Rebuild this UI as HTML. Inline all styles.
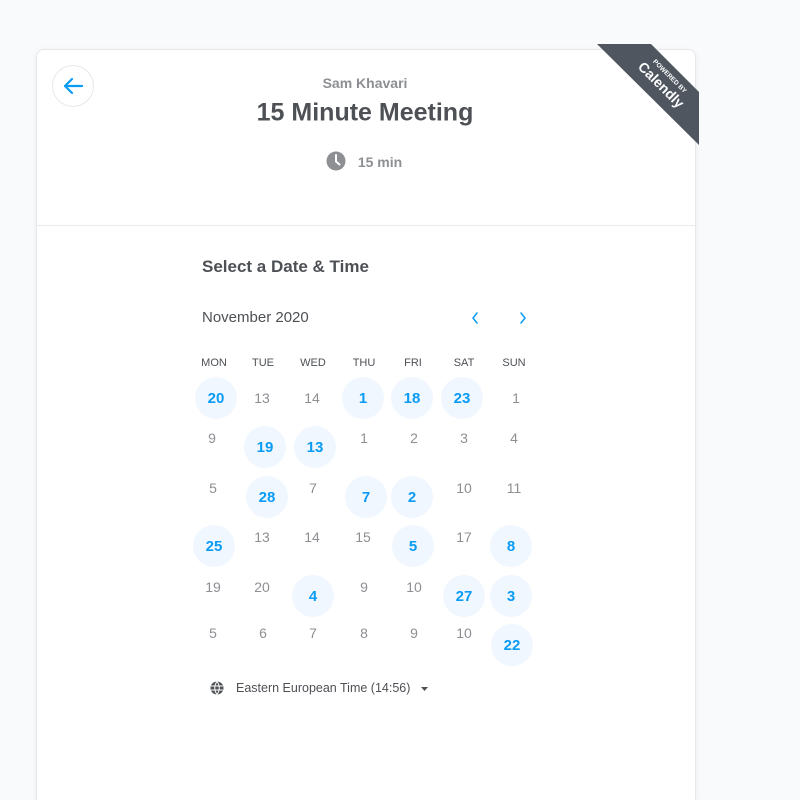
<!DOCTYPE html>
<html style="overflow:hidden;height:800px"><head><meta charset="utf-8"><style>
body{margin:0;width:800px;height:800px;background:#f9fafc;font-family:"Liberation Sans",sans-serif;position:relative;overflow:hidden}
.card{position:absolute;left:36px;top:49px;width:658px;height:751px;background:#fff;border:1px solid #e6e8ec;border-bottom:none;border-radius:8px 8px 0 0;box-shadow:0 1px 6px rgba(0,0,0,.06)}
.hr{position:absolute;left:36px;top:225px;width:659px;height:1px;background:#e8eaee}
.t{position:absolute;transform:translate(-50%,-50%);white-space:nowrap}
.g{font-size:14px;color:#8d8f93}
.c{width:42px;height:42px;border-radius:50%;background:#f0f7ff;color:#0a9bf5;font-weight:bold;font-size:15px;display:flex;align-items:center;justify-content:center}
.h{font-size:11px;color:#4d5055}
</style></head><body>
<div class="card"></div>
<div class="hr"></div>
<svg style="position:absolute;left:0;top:0" width="800" height="800">
<polygon points="597,44 651,44 699,92 699,145" fill="#4f5660"/>
<g transform="translate(662,84) rotate(45)">
<text x="0" y="-9" text-anchor="middle" font-family="Liberation Sans" font-size="6.5" font-weight="bold" fill="#fff">POWERED BY</text>
<text x="0" y="6" text-anchor="middle" font-family="Liberation Sans" font-size="14" font-weight="bold" fill="#fff">Calendly</text>
</g>
<circle cx="73" cy="86" r="20.5" fill="#fff" stroke="#e6e8ec"/>
<path d="M82 86H65M72 79l-7 7 7 7" stroke="#0a9bf5" stroke-width="2.2" fill="none" stroke-linecap="round" stroke-linejoin="round"/>
<circle cx="336" cy="161" r="9.5" fill="#8d8f93"/>
<path d="M336 155v6.5l3.5 3" stroke="#fff" stroke-width="2" fill="none" stroke-linecap="round"/>
<path d="M477 313l-4 5 4 5M521 313l4 5-4 5" stroke="#0a9bf5" stroke-width="1.5" fill="none" stroke-linecap="round"/>
<circle cx="217" cy="688" r="6.5" fill="#4d5055"/>
<path d="M211 686h12M211 690h12M217 681.5c-3 4-3 9 0 13M217 681.5c3 4 3 9 0 13" stroke="#fff" stroke-width="1" fill="none"/>
<path d="M421 687h7l-3.5 4z" fill="#4d5055"/>
</svg>
<div class="t" style="left:365px;top:83px;font-size:14px;font-weight:bold;color:#8d8f93">Sam Khavari</div>
<div class="t" style="left:365px;top:113px;font-size:25px;font-weight:bold;color:#4d5055">15 Minute Meeting</div>
<div class="t" style="left:380px;top:162px;font-size:14px;font-weight:bold;color:#8d8f93">15 min</div>
<div style="position:absolute;left:202px;top:257px;font-size:17px;font-weight:bold;color:#4d5055">Select a Date &amp; Time</div>
<div style="position:absolute;left:202px;top:309px;font-size:15px;color:#4d5055">November 2020</div>
<div class="t h" style="left:214px;top:363px">MON</div>
<div class="t h" style="left:263px;top:363px">TUE</div>
<div class="t h" style="left:313px;top:363px">WED</div>
<div class="t h" style="left:364px;top:363px">THU</div>
<div class="t h" style="left:413px;top:363px">FRI</div>
<div class="t h" style="left:464px;top:363px">SAT</div>
<div class="t h" style="left:514px;top:363px">SUN</div>

<div class="t c" style="left:216px;top:398px">20</div>
<div class="t g" style="left:262px;top:398px">13</div>
<div class="t g" style="left:312px;top:398px">14</div>
<div class="t c" style="left:363px;top:398px">1</div>
<div class="t c" style="left:412px;top:398px">18</div>
<div class="t c" style="left:462px;top:398px">23</div>
<div class="t g" style="left:516px;top:398px">1</div>

<div class="t g" style="left:212px;top:438px">9</div>
<div class="t c" style="left:265px;top:447px">19</div>
<div class="t c" style="left:315px;top:447px">13</div>
<div class="t g" style="left:364px;top:438px">1</div>
<div class="t g" style="left:414px;top:438px">2</div>
<div class="t g" style="left:464px;top:438px">3</div>
<div class="t g" style="left:514px;top:438px">4</div>

<div class="t g" style="left:213px;top:488px">5</div>
<div class="t c" style="left:267px;top:497px">28</div>
<div class="t g" style="left:313px;top:488px">7</div>
<div class="t c" style="left:366px;top:497px">7</div>
<div class="t c" style="left:412px;top:497px">2</div>
<div class="t g" style="left:464px;top:488px">10</div>
<div class="t g" style="left:514px;top:488px">11</div>

<div class="t c" style="left:214px;top:546px">25</div>
<div class="t g" style="left:262px;top:537px">13</div>
<div class="t g" style="left:312px;top:537px">14</div>
<div class="t g" style="left:363px;top:537px">15</div>
<div class="t c" style="left:413px;top:546px">5</div>
<div class="t g" style="left:464px;top:537px">17</div>
<div class="t c" style="left:511px;top:546px">8</div>

<div class="t g" style="left:213px;top:587px">19</div>
<div class="t g" style="left:262px;top:587px">20</div>
<div class="t c" style="left:313px;top:596px">4</div>
<div class="t g" style="left:364px;top:587px">9</div>
<div class="t g" style="left:414px;top:587px">10</div>
<div class="t c" style="left:464px;top:596px">27</div>
<div class="t c" style="left:511px;top:596px">3</div>

<div class="t g" style="left:213px;top:633px">5</div>
<div class="t g" style="left:263px;top:633px">6</div>
<div class="t g" style="left:313px;top:633px">7</div>
<div class="t g" style="left:364px;top:633px">8</div>
<div class="t g" style="left:414px;top:633px">9</div>
<div class="t g" style="left:464px;top:633px">10</div>
<div class="t c" style="left:512px;top:645px">22</div>

<div style="position:absolute;left:236px;top:681px;font-size:12.5px;color:#4d5055">Eastern European Time (14:56)</div>
</body></html>
